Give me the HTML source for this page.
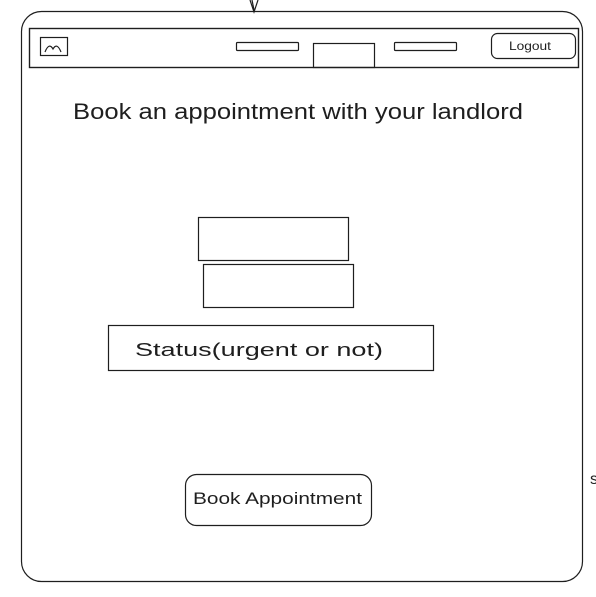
<!DOCTYPE html>
<html><head><meta charset="utf-8"><style>
html,body{margin:0;padding:0;background:#fff;width:596px;height:597px;overflow:hidden}
svg{display:block}
text{font-family:"Liberation Sans",sans-serif;fill:#1e1e1e}
</style></head><body>
<svg width="596" height="597" viewBox="0 0 596 597" fill="none" stroke="#1e1e1e" stroke-width="1.2">
<path d="M250 0 L254 12 L258 0"/>
<path d="M252 0 L254 10"/>
<rect x="21.5" y="11.5" width="561" height="570" rx="20"/>
<rect x="29.5" y="28.5" width="549" height="39" stroke-width="1.4"/>
<rect x="40.5" y="37.5" width="27" height="18"/>
<path d="M45 52 Q49 42 53 49 Q57 42 61 52"/>
<rect x="236.5" y="42.5" width="62" height="8" rx="1"/>
<rect x="313.5" y="43.5" width="61" height="24"/>
<rect x="394.5" y="42.5" width="62" height="8" rx="1"/>
<rect x="491.5" y="33.5" width="84" height="25" rx="6"/>
<text x="509" y="50" font-size="12" stroke="none" textLength="42" lengthAdjust="spacingAndGlyphs">Logout</text>
<text x="73" y="119" font-size="22" stroke="none" textLength="450" lengthAdjust="spacingAndGlyphs">Book an appointment with your landlord</text>
<rect x="198.5" y="217.5" width="150" height="43"/>
<rect x="203.5" y="264.5" width="150" height="43"/>
<rect x="108.5" y="325.5" width="325" height="45"/>
<text x="135" y="356" font-size="18" stroke="none" textLength="248" lengthAdjust="spacingAndGlyphs">Status(urgent or not)</text>
<rect x="185.5" y="474.5" width="186" height="51" rx="11"/>
<text x="193" y="504" font-size="17" stroke="none" textLength="169" lengthAdjust="spacingAndGlyphs">Book Appointment</text>
<text x="590" y="484" font-size="16" stroke="none">s</text>
</svg>
</body></html>
